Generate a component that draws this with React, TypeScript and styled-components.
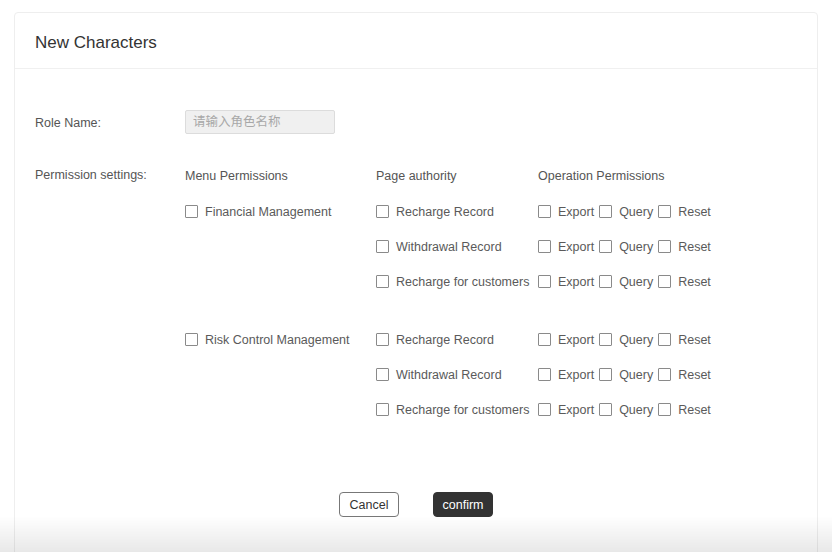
import React from "react";
import styled, { createGlobalStyle } from "styled-components";

const Global = createGlobalStyle`
  html, body { margin: 0; padding: 0; background: #fff; }
  body { font-family: "Liberation Sans", Arial, "Noto Sans CJK SC", sans-serif; color: #555; }
  * { box-sizing: border-box; }
`;

const Page = styled.div`
  padding: 12px 14px 0 14px;
  min-height: 552px;
`;

const Card = styled.div`
  border: 1px solid #eeeeee;
  border-radius: 4px;
  min-height: 560px;
  background: #fff;
`;

const CardHeader = styled.div`
  height: 56px;
  display: flex;
  align-items: center;
  padding: 5px 0 0 20px;
  border-bottom: 1px solid #f0f0f0;
  font-size: 17px;
  color: #333;
`;

const CardBody = styled.div`
  padding: 41px 20px 0 20px;
`;

const FormRow = styled.div`
  display: flex;
  align-items: flex-start;
`;

const FieldLabel = styled.div<{ $top?: number }>`
  width: 150px;
  flex: none;
  font-size: 12.5px;
  color: #555;
  line-height: ${(p) => (p.$top ? 35 : 24)}px;
  padding-top: ${(p) => (p.$top ? 0 : 1)}px;
`;

const TextInput = styled.input`
  width: 150px;
  height: 24px;
  border: 1px solid #dcdcdc;
  border-radius: 2px;
  background: #f0f0f0;
  padding: 0 7px;
  font-size: 12.5px;
  font-family: inherit;
  outline: none;
  &::placeholder { color: #a8a8a8; }
`;

const PermSection = styled.div`
  margin-top: 23px;
`;

const PermTable = styled.div`
  display: flex;
  flex-direction: column;
`;

const HeadRow = styled.div`
  display: flex;
  height: 35px;
  margin-bottom: 1px;
  align-items: center;
  font-size: 12.5px;
  color: #555;
`;

const MenuCol = styled.div`
  width: 191px;
  flex: none;
`;

const PageCol = styled.div`
  width: 162px;
  flex: none;
`;

const Group = styled.div`
  display: flex;
  margin-bottom: 23px;
`;

const MenuCell = styled.div`
  width: 191px;
  flex: none;
  height: 35px;
  display: flex;
  align-items: center;
`;

const Rows = styled.div`
  display: flex;
  flex-direction: column;
`;

const Row = styled.div`
  display: flex;
  height: 35px;
  align-items: center;
`;

const PageCell = styled.div`
  width: 162px;
  flex: none;
  display: flex;
  align-items: center;
`;

const OpsCell = styled.div`
  display: flex;
  align-items: center;
  gap: 5px;
`;

const Check = styled.label`
  display: inline-flex;
  align-items: center;
  gap: 7px;
  font-size: 12.5px;
  color: #5a5a5a;
  white-space: nowrap;
`;

const Box = styled.span`
  width: 13px;
  height: 13px;
  border: 1px solid #8a8a8a;
  border-radius: 1px;
  background: #fff;
  flex: none;
`;

const Footer = styled.div`
  display: flex;
  justify-content: center;
  gap: 34px;
  margin-top: 42px;
`;

const Button = styled.button<{ $primary?: boolean }>`
  width: 60px;
  height: 25px;
  border-radius: 4px;
  font-family: inherit;
  font-size: 12.5px;
  padding: 0;
  cursor: pointer;
  border: 1px solid ${(p) => (p.$primary ? "#333" : "#777")};
  background: ${(p) => (p.$primary ? "#333" : "#fff")};
  color: ${(p) => (p.$primary ? "#fff" : "#333")};
`;

const BottomShade = styled.div`
  position: fixed;
  left: 0;
  right: 0;
  bottom: 0;
  height: 36px;
  pointer-events: none;
  background: linear-gradient(to bottom, rgba(0, 0, 0, 0), rgba(0, 0, 0, 0.09));
`;

const CheckItem = ({ text }: { text: string }) => (
  <Check>
    <Box />
    {text}
  </Check>
);

const pages = ["Recharge Record", "Withdrawal Record", "Recharge for customers"];
const ops = ["Export", "Query", "Reset"];
const menus = ["Financial Management", "Risk Control Management"];

export default function App() {
  return (
    <>
      <Global />
      <Page>
        <Card>
          <CardHeader>New Characters</CardHeader>
          <CardBody>
            <FormRow>
              <FieldLabel>Role Name:</FieldLabel>
              <TextInput placeholder="请输入角色名称" />
            </FormRow>
            <PermSection>
              <FormRow>
                <FieldLabel $top={1}>Permission settings:</FieldLabel>
                <PermTable>
                  <HeadRow>
                    <MenuCol>Menu Permissions</MenuCol>
                    <PageCol>Page authority</PageCol>
                    <div>Operation Permissions</div>
                  </HeadRow>
                  {menus.map((m) => (
                    <Group key={m}>
                      <MenuCell>
                        <CheckItem text={m} />
                      </MenuCell>
                      <Rows>
                        {pages.map((p) => (
                          <Row key={p}>
                            <PageCell>
                              <CheckItem text={p} />
                            </PageCell>
                            <OpsCell>
                              {ops.map((o) => (
                                <CheckItem key={o} text={o} />
                              ))}
                            </OpsCell>
                          </Row>
                        ))}
                      </Rows>
                    </Group>
                  ))}
                </PermTable>
              </FormRow>
            </PermSection>
            <Footer>
              <Button>Cancel</Button>
              <Button $primary>confirm</Button>
            </Footer>
          </CardBody>
        </Card>
      </Page>
      <BottomShade />
    </>
  );
}
